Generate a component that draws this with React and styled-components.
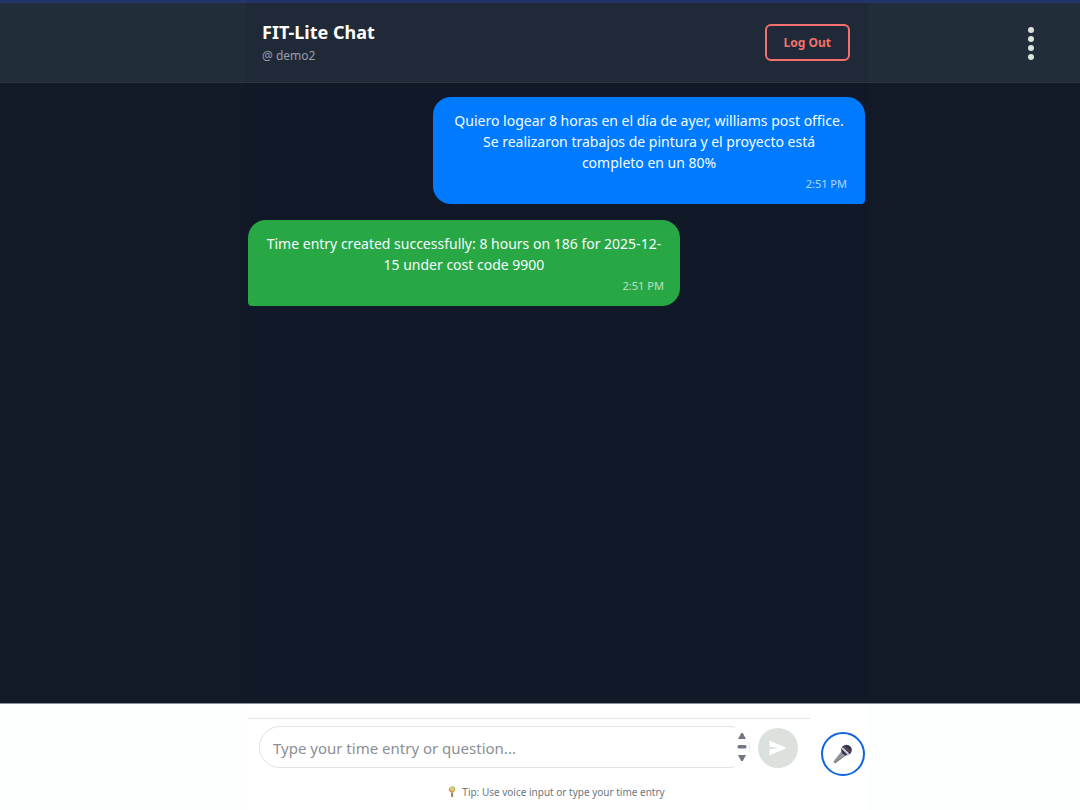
import { useState } from "react";
import styled, { createGlobalStyle } from "styled-components";

const GlobalStyle = createGlobalStyle`
  * {
    box-sizing: border-box;
  }

  body {
    margin: 0;
    font-family: "Noto Sans", "Open Sans", sans-serif;
    background-color: #131a27;
  }

  button,
  textarea {
    font-family: inherit;
  }
`;

const Page = styled.div`
  min-height: 100vh;
  display: flex;
  flex-direction: column;
`;

const Columns = styled.div`
  display: grid;
  grid-template-columns: 246fr 622fr 212fr;
`;

const HeaderBar = styled(Columns)`
  background-color: #222d3a;
  border-top: 3px solid #22346a;
  border-bottom: 1px solid #2c3542;
  height: 83px;
`;

const HeaderMain = styled.div`
  grid-column: 2;
  background-color: #202937;
  display: flex;
  justify-content: space-between;
  align-items: center;
  padding: 0 18px 0 16px;
`;

const Title = styled.h1`
  margin: 0;
  font-size: 18px;
  line-height: 24px;
  font-weight: 700;
  color: #ffffff;
`;

const UserName = styled.div`
  margin-top: 2px;
  font-size: 12px;
  line-height: 20px;
  color: #9a9fae;
`;

const LogOut = styled.button`
  height: 37px;
  padding: 0 17px;
  border: 2px solid #f3706d;
  border-radius: 6px;
  background: transparent;
  color: #f3706d;
  font-size: 12px;
  font-weight: 700;
  cursor: pointer;
`;

const HeaderSide = styled.div`
  display: flex;
  justify-content: flex-end;
  align-items: center;
  padding-right: 41px;
`;

const MenuButton = styled.button`
  display: flex;
  padding: 4px;
  border: none;
  background: transparent;
  cursor: pointer;
`;

const Body = styled(Columns)`
  flex: 1;
`;

const Messages = styled.main`
  grid-column: 2;
  background-color: #111827;
  display: flex;
  flex-direction: column;
  gap: 16px;
  padding: 14px 3px 14px 2px;
`;

const Bubble = styled.div`
  width: 70%;
  padding: ${(props) => (props.$own ? "13px 18px 12px" : "13px 16px 12px")};
  align-self: ${(props) => (props.$own ? "flex-end" : "flex-start")};
  background-color: ${(props) => (props.$own ? "#007bff" : "#28a745")};
  border-radius: ${(props) =>
    props.$own ? "18px 18px 4px 18px" : "18px 18px 18px 4px"};
  color: #f5fbff;
`;

const Text = styled.p`
  margin: 0;
  font-size: 14px;
  line-height: 21px;
  text-align: center;
`;

const Time = styled.time`
  display: block;
  margin-top: 3px;
  font-size: 11px;
  line-height: 16px;
  text-align: right;
  opacity: 0.7;
`;

const Footer = styled(Columns)`
  background-color: #fdfffe;
  border-top: 1px solid #8b919b;
`;

const FooterMain = styled.div`
  grid-column: 2;
  background-color: #ffffff;
  padding: 14px 3px 10px 2px;
`;

const FooterRow = styled.div`
  display: flex;
  justify-content: space-between;
`;

const Composer = styled.form`
  flex: 1;
  max-width: 562px;
  display: flex;
  align-items: flex-end;
  gap: 8px;
  border-top: 1px solid #e6e6e6;
  padding: 0 12px 8px 11px;
`;

const Field = styled.div`
  position: relative;
  flex: 1;
  height: 42px;
  border: 1px solid #e2e2e2;
  border-radius: 21px;
`;

const TextField = styled.textarea`
  display: block;
  width: 100%;
  height: 40px;
  padding: 9px 24px 7px 13px;
  border: none;
  outline: none;
  resize: none;
  overflow: hidden;
  background: transparent;
  color: #202937;
  font-size: 15px;
  line-height: 24px;

  &::placeholder {
    color: #8a8f94;
    opacity: 1;
  }
`;

const Scroller = styled.div`
  position: absolute;
  top: -1px;
  bottom: -1px;
  right: 0;
  width: 14px;
  display: flex;
  justify-content: center;
  align-items: center;
  background-color: #ffffff;
`;

const SendButton = styled.button`
  display: flex;
  justify-content: center;
  align-items: center;
  width: 40px;
  height: 40px;
  padding: 0;
  border: none;
  border-radius: 50%;
  background-color: #dce1de;
  cursor: pointer;
`;

const Tip = styled.div`
  display: flex;
  justify-content: center;
  align-items: center;
  gap: 6px;
  margin-top: 8px;
  font-size: 10px;
  line-height: 16px;
  color: #6c757d;
`;

const MicButton = styled.button`
  display: flex;
  justify-content: center;
  align-items: center;
  width: 44px;
  height: 44px;
  margin-top: 14px;
  padding: 0;
  border: 2px solid #0d66e0;
  border-radius: 50%;
  background-color: #ffffff;
  cursor: pointer;
`;

const DotsIcon = () => (
  <svg width="8" height="34" viewBox="0 0 8 34" fill="#dce2de">
    <circle cx="4" cy="4" r="3" />
    <circle cx="4" cy="13" r="3" />
    <circle cx="4" cy="22" r="3" />
    <circle cx="4" cy="31" r="3" />
  </svg>
);

const ScrollIcon = () => (
  <svg width="10" height="30" viewBox="0 0 10 30" fill="#707684">
    <path d="M4.2 1h1.6L9 7H1z" />
    <rect x="0.5" y="13" width="9" height="3.5" rx="1.5" />
    <path d="M1 23h8l-3.2 6H4.2z" />
  </svg>
);

const SendIcon = () => (
  <svg width="18" height="16" viewBox="0 0 18 16" fill="#ffffff">
    <path d="M0.5 0.5L17.5 8 0.5 15.5V9.6L10 8 0.5 6.4z" />
  </svg>
);

const MicIcon = () => (
  <svg width="22" height="22" viewBox="0 0 22 22">
    <path d="M10 7.5l4.500 4.500L3 20.500 1.200 18.700z" fill="#9a9ea4" />
    <path d="M11 10L3 18.500" stroke="#777b83" strokeWidth="1" />
    <path d="M13.500 12L3 20" stroke="#74787f" strokeWidth="1" />
    <circle cx="14.500" cy="7" r="5.300" fill="#34334a" />
    <path d="M10.300 5l6.500 6.500" stroke="#cfd2dc" strokeWidth="2" />
    <path d="M12.500 3.500l6 5.500" stroke="#6b4a55" strokeWidth="1.400" />
  </svg>
);

const BulbIcon = () => (
  <svg width="8" height="12" viewBox="0 0 8 12">
    <circle cx="4" cy="3.5" r="3.3" fill="#d9cf7a" />
    <path d="M4.2 0.8A2.8 2.8 0 0 1 6.8 4" stroke="#8fbf6a" fill="none" />
    <path d="M1.3 3l2.4 3.5L5.5 4.5" stroke="#d9694a" fill="none" />
    <rect x="3" y="6.5" width="2.2" height="4.8" rx="1" fill="#a08a6c" />
  </svg>
);

const messageList = [
  {
    id: 1,
    own: true,
    text: "Quiero logear 8 horas en el día de ayer, williams post office. Se realizaron trabajos de pintura y el proyecto está completo en un 80%",
    time: "2:51 PM",
  },
  {
    id: 2,
    own: false,
    text: "Time entry created successfully: 8 hours on 186 for 2025-12-15 under cost code 9900",
    time: "2:51 PM",
  },
];

const Header = () => (
  <HeaderBar as="header">
    <HeaderMain>
      <div>
        <Title>FIT-Lite Chat</Title>
        <UserName>@ demo2</UserName>
      </div>
      <LogOut type="button">Log Out</LogOut>
    </HeaderMain>
    <HeaderSide>
      <MenuButton type="button" aria-label="Menu">
        <DotsIcon />
      </MenuButton>
    </HeaderSide>
  </HeaderBar>
);

const MessageInput = () => {
  const [message, setMessage] = useState("");

  const onSubmit = (e) => {
    e.preventDefault();
    setMessage("");
  };

  return (
    <Footer as="footer">
      <FooterMain>
        <FooterRow>
          <Composer onSubmit={onSubmit}>
            <Field>
              <TextField
                rows={1}
                aria-label="Message"
                placeholder="Type your time entry or question..."
                value={message}
                onChange={(e) => setMessage(e.target.value)}
              />
              <Scroller>
                <ScrollIcon />
              </Scroller>
            </Field>
            <SendButton type="submit" aria-label="Send">
              <SendIcon />
            </SendButton>
          </Composer>
          <MicButton type="button" aria-label="Voice input">
            <MicIcon />
          </MicButton>
        </FooterRow>
        <Tip>
          <BulbIcon />
          Tip: Use voice input or type your time entry
        </Tip>
      </FooterMain>
    </Footer>
  );
};

export default function App() {
  return (
    <Page>
      <GlobalStyle />
      <Header />
      <Body>
        <Messages>
          {messageList.map((message) => (
            <Bubble key={message.id} $own={message.own}>
              <Text>{message.text}</Text>
              <Time>{message.time}</Time>
            </Bubble>
          ))}
        </Messages>
      </Body>
      <MessageInput />
    </Page>
  );
}
